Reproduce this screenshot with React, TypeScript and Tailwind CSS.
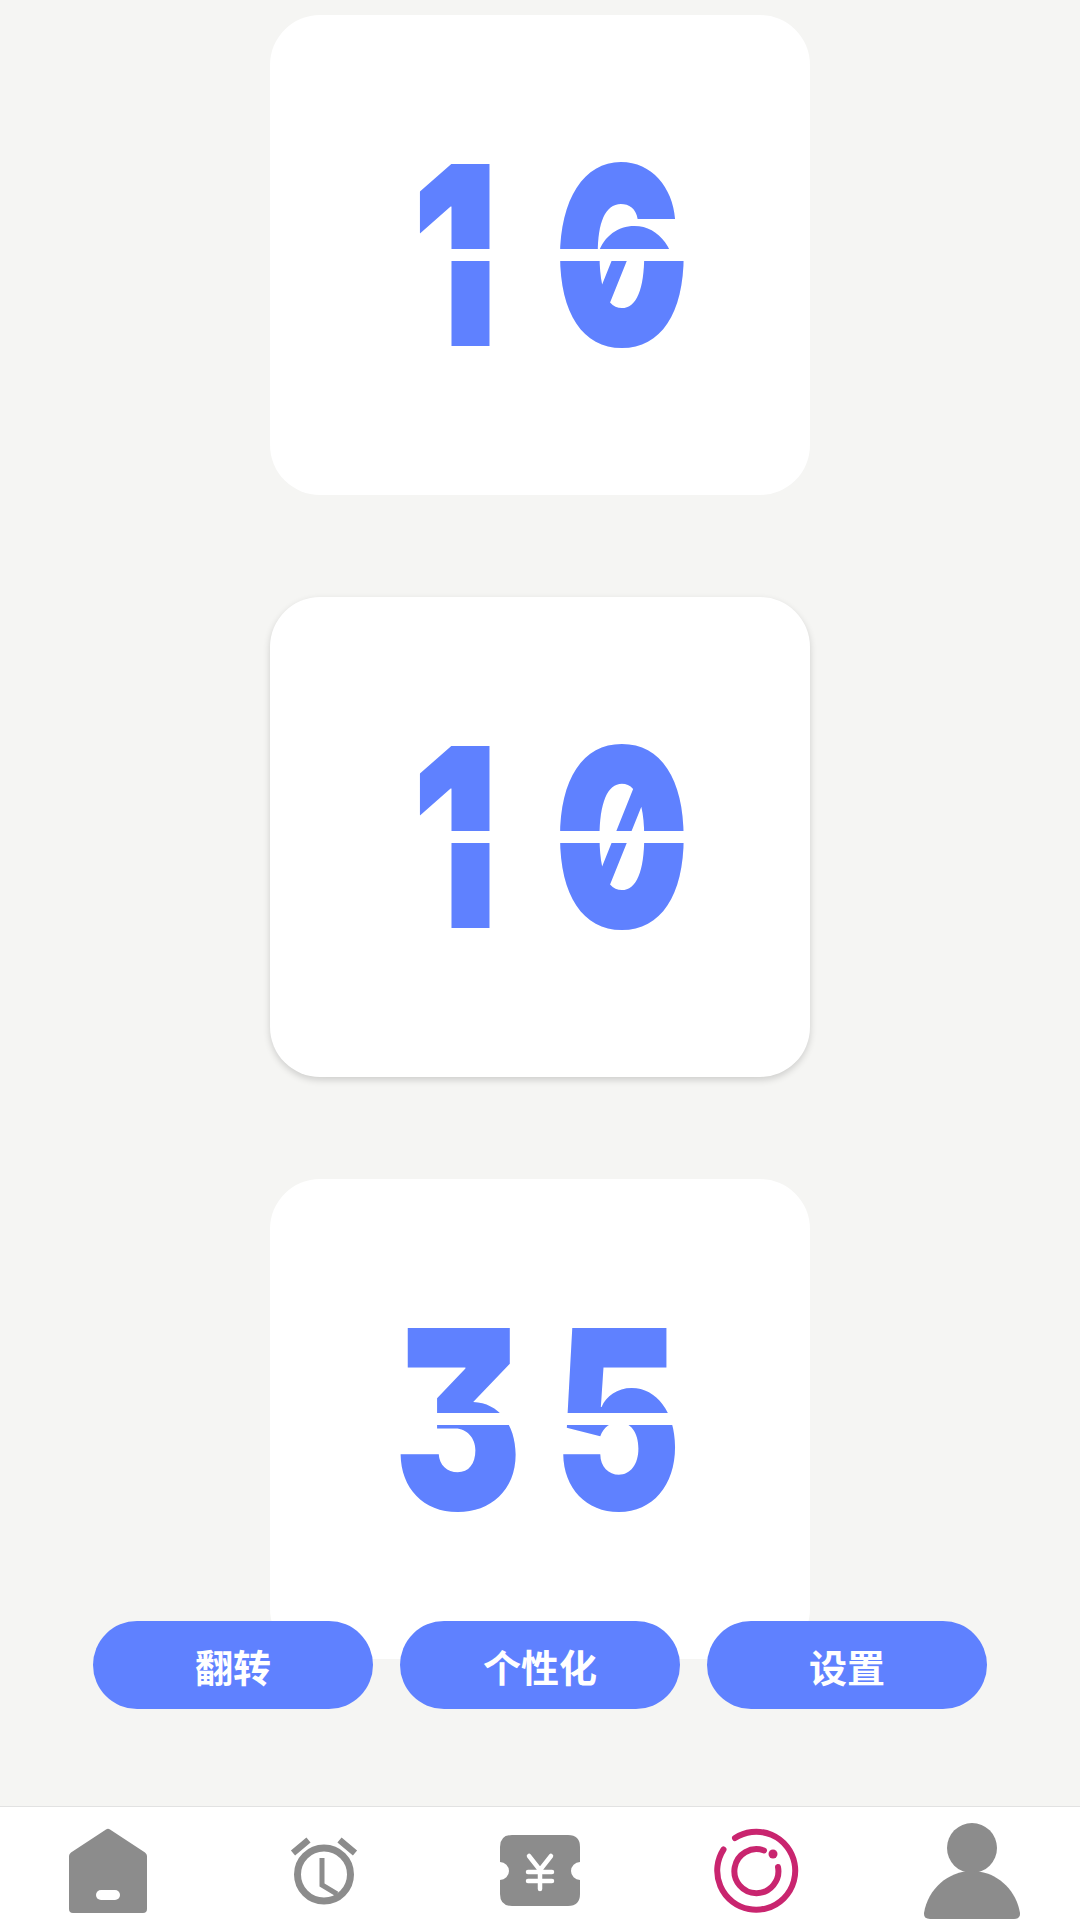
const flips = [
  { top: "16", bottom: "10", shadow: "" },
  { top: "10", bottom: "10", shadow: "shadow-[0_3px_7px_rgba(0,0,0,0.16)]" },
  { top: "35", bottom: "35", shadow: "" },
];

const actions = ["翻转", "个性化", "设置"];

function Digits({ value }: { value: string }) {
  return (
    <div className="flex h-[200px] justify-center pr-[10px] font-['Inter',sans-serif] text-[250px] leading-[200px] font-black text-[#5f81ff] [font-feature-settings:'cv09','zero']">
      {value.split("").map((digit, i) => (
        <span key={i} className="w-[160px] scale-x-[0.77] text-center">
          {digit}
        </span>
      ))}
    </div>
  );
}

function FlipCard({ top, bottom, shadow }: { top: string; bottom: string; shadow: string }) {
  return (
    <div className={`flex h-[480px] w-[540px] flex-col gap-[12px] overflow-hidden rounded-[50px] bg-white ${shadow}`}>
      <div className="h-[234px] overflow-hidden pt-[140px]">
        <Digits value={top} />
      </div>
      <div className="h-[234px] overflow-hidden">
        <div className="-mt-[106px]">
          <Digits value={bottom} />
        </div>
      </div>
    </div>
  );
}

function HomeIcon() {
  return (
    <svg viewBox="0 0 100 114" className="h-[114px] w-[100px]">
      <path
        d="M48 22.500Q50 21 52 22.500L87 45.500Q89 47 89 49V102Q89 106 85 106H15Q11 106 11 102V49Q11 47 13 45.500Z"
        fill="#8c8c8c"
      />
      <rect x="38" y="83" width="24" height="10" rx="5" fill="#fff" />
    </svg>
  );
}

function ClockIcon() {
  return (
    <svg viewBox="0 0 100 114" fill="none" stroke="#8c8c8c" className="h-[114px] w-[100px]">
      <circle cx="50" cy="67.500" r="26.500" strokeWidth="7" />
      <path d="M48 51V78L63 87" strokeWidth="5" />
      <path d="M19 46L34.500 33M65.500 33L81 46" strokeWidth="6.500" />
    </svg>
  );
}

function TicketIcon() {
  return (
    <svg viewBox="0 0 100 114" className="h-[114px] w-[100px]">
      <path
        d="M22 28H78Q90 28 90 40V55A9 9 0 0 0 90 73V87Q90 99 78 99H22Q10 99 10 87V73A9 9 0 0 0 10 55V40Q10 28 22 28Z"
        fill="#8c8c8c"
      />
      <path
        d="M39 49L50 63L61 49M38 65H62M38 74H62M50 63V82"
        fill="none"
        stroke="#fff"
        strokeWidth="4.500"
        strokeLinecap="round"
      />
    </svg>
  );
}

function RingIcon() {
  return (
    <svg viewBox="0 0 100 114" fill="none" stroke="#c9256f" strokeWidth="6" strokeLinecap="round" className="h-[114px] w-[100px]">
      <path d="M29 31A39 39 0 1 1 17.500 42.500" />
      <path d="M58 43.500A22 22 0 1 0 72 60" />
      <circle cx="67" cy="47" r="4.500" fill="#c9256f" stroke="none" />
    </svg>
  );
}

function UserIcon() {
  return (
    <svg viewBox="0 0 100 114" fill="#8c8c8c" className="h-[114px] w-[100px]">
      <circle cx="50" cy="41" r="25" />
      <path d="M2 106C6 82 26 64 50 64C74 64 94 82 98 106Q98.500 112 92 112H8Q1.500 112 2 106Z" />
    </svg>
  );
}

export default function App() {
  return (
    <div className="relative flex h-[1920px] w-[1080px] flex-col overflow-hidden bg-[#f5f5f3]">
      <div className="flex flex-1 flex-col items-center gap-[102px] pt-[15px]">
        {flips.map((flip) => (
          <FlipCard key={flip.top + flip.shadow} {...flip} />
        ))}
      </div>

      <div className="absolute top-[1621px] left-[93px] flex gap-[27px]">
        {actions.map((label) => (
          <button
            key={label}
            className="h-[88px] w-[280px] rounded-[44px] bg-[#5f81ff] font-['Noto_Sans_CJK_SC',sans-serif] text-[38px] font-bold text-white"
          >
            {label}
          </button>
        ))}
      </div>

      <nav className="grid h-[114px] grid-cols-5 border-t border-[#e2e2e2] bg-white">
        <div className="flex justify-center"><HomeIcon /></div>
        <div className="flex justify-center"><ClockIcon /></div>
        <div className="flex justify-center"><TicketIcon /></div>
        <div className="flex justify-center"><RingIcon /></div>
        <div className="flex justify-center"><UserIcon /></div>
      </nav>
    </div>
  );
}
